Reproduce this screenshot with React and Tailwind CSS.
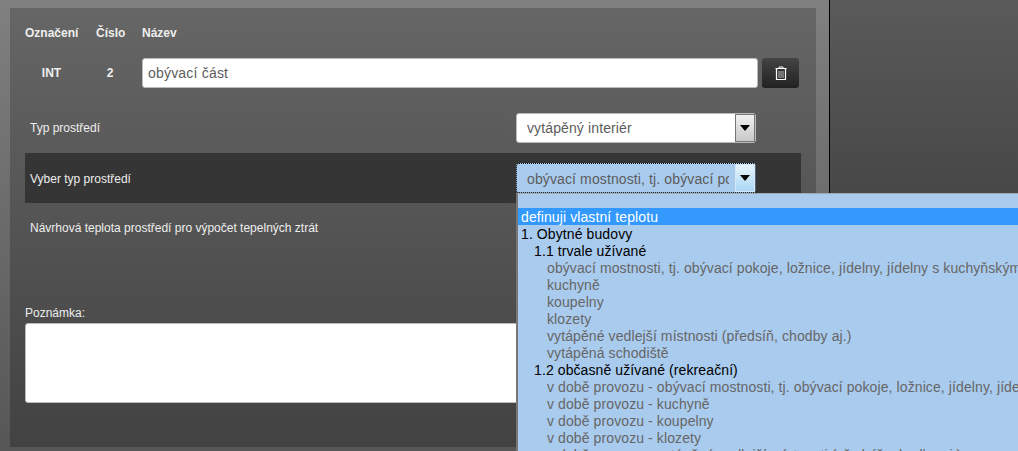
const options = [
  { text: 'definuji vlastní teplotu', active: true },
  { text: '1. Obytné budovy', level: 0, group: true },
  { text: '1.1 trvale užívané', level: 1, group: true },
  { text: 'obývací mostnosti, tj. obývací pokoje, ložnice, jídelny, jídelny s kuchyňským koutem', level: 2 },
  { text: 'kuchyně', level: 2 },
  { text: 'koupelny', level: 2 },
  { text: 'klozety', level: 2 },
  { text: 'vytápěné vedlejší místnosti (předsíň, chodby aj.)', level: 2 },
  { text: 'vytápěná schodiště', level: 2 },
  { text: '1.2 občasně užívané (rekreační)', level: 1, group: true },
  { text: 'v době provozu - obývací mostnosti, tj. obývací pokoje, ložnice, jídelny, jídelny s kuchyňským koutem', level: 2 },
  { text: 'v době provozu - kuchyně', level: 2 },
  { text: 'v době provozu - koupelny', level: 2 },
  { text: 'v době provozu - klozety', level: 2 },
  { text: 'v době provozu - vytápěné vedlejší místnosti (předsíň, chodby aj.)', level: 2 },
];

function TrashIcon() {
  return (
    <svg width="12" height="14" viewBox="0 0 12 14" fill="none" stroke="currentColor">
      <path d="M0.5 2.5h11" />
      <path d="M4 2.5V1h4v1.5" />
      <path d="M1.5 2.5v11h9v-11" strokeWidth="1.2" />
      <path d="M4 5v7M6 5v7M8 5v7" strokeWidth="1" stroke="#b8b8b8" />
    </svg>
  );
}

function SelectBox({ value, focused }) {
  return (
    <div className={`flex h-[30px] w-[240px] items-center rounded-[3px] pl-[10px] text-[14px] tracking-[0.12px] text-[#5c5c5c] ${focused ? 'border border-dotted border-black bg-[#a9cbee]' : 'border border-[#bbb] bg-white'}`}>
      <span className={`flex-1 overflow-hidden whitespace-nowrap ${focused ? 'mr-[6px] pt-[2px]' : ''}`}>{value}</span>
      <span className={`flex h-full w-[20px] shrink-0 items-center justify-center border ${focused ? 'border-[#d4e8f8] bg-gradient-to-b from-[#e8f4fc] to-[#a9d8f5]' : 'border-[#777] bg-gradient-to-b from-[#f2f2f2] to-[#c8c8c8]'}`}>
        <span className="h-0 w-0 border-x-[5px] border-t-[6px] border-x-transparent border-t-black" />
      </span>
    </div>
  );
}

function FormRow({ label, dark, children }) {
  return (
    <div className={`flex h-[50px] items-center pl-[5px] text-[12px] text-[#eee] ${dark ? 'w-[776px] bg-[#353535]' : ''}`}>
      <div className={`w-[486px] ${dark ? 'pt-[2px]' : ''}`}>{label}</div>
      {children}
    </div>
  );
}

export default function App() {
  return (
    <div className="relative flex h-[451px] w-[1018px] overflow-hidden font-['Liberation_Sans',Arial,sans-serif]">
      <div className="h-full w-[829px] bg-gradient-to-b from-[#808080] to-[#565656] pl-[10px] pt-[8px]">
        <div className="h-[439px] w-[806px] bg-gradient-to-b from-[#666666] to-[#424242] px-[15px] pt-[16px]">
          <div className="grid h-[16px] grid-cols-[71px_46px_1fr] items-center text-[12px] font-bold text-[#eee]">
            <div>Označení</div>
            <div>Číslo</div>
            <div>Název</div>
          </div>
          <div className="mt-[18px] grid grid-cols-[53px_18px_28px_18px_1fr] items-center text-[12px] font-bold text-[#eee]">
            <div className="text-center">INT</div>
            <div />
            <div className="text-center">2</div>
            <div />
            <div className="flex gap-[4px]">
              <div className="flex h-[30px] w-[616px] items-center rounded-[3px] border border-[#bbb] bg-white pl-[5px] text-[14px] font-normal tracking-[0.2px] text-[#5c5c5c]">obývací část</div>
              <button className="flex h-[30px] w-[37px] items-center justify-center rounded-[3px] bg-gradient-to-b from-[#444] to-[#222] text-white">
                <TrashIcon />
              </button>
            </div>
          </div>
          <div className="mt-[15px]">
            <FormRow label="Typ prostředí"><SelectBox value="vytápěný interiér" /></FormRow>
            <FormRow label="Vyber typ prostředí" dark><SelectBox value="obývací mostnosti, tj. obývací pokoje" focused /></FormRow>
            <FormRow label="Návrhová teplota prostředí pro výpočet tepelných ztrát" />
          </div>
          <div className="mt-[53px] text-[12px] leading-[14px] text-[#eee]">Poznámka:</div>
          <div className="mt-[3px] h-[80px] w-[776px] rounded-[3px] border border-[#bbb] bg-white" />
        </div>
      </div>
      <div className="h-full flex-1 border-l border-black bg-gradient-to-b from-[#5a5a5a] to-[#303030]" />
      <div className="absolute left-[516px] top-[193px] w-[502px] overflow-hidden border-t border-l-2 border-t-[#a0a8b0] border-l-[#777] bg-[#a9cbee] pt-[14px] text-[14px] leading-[19px] tracking-[0.1px]">
        {options.map((o) => (
          <div
            key={o.text}
            className={`h-[17px] whitespace-nowrap ${o.active ? 'bg-[#3399ff] pl-[3px] text-white' : o.group ? 'text-black' : 'text-[#666]'} ${o.level === 0 ? 'pl-[3px]' : ''} ${o.level === 1 ? 'pl-[16px]' : ''} ${o.level === 2 ? 'pl-[29px]' : ''}`}
          >
            {o.text}
          </div>
        ))}
      </div>
    </div>
  );
}
